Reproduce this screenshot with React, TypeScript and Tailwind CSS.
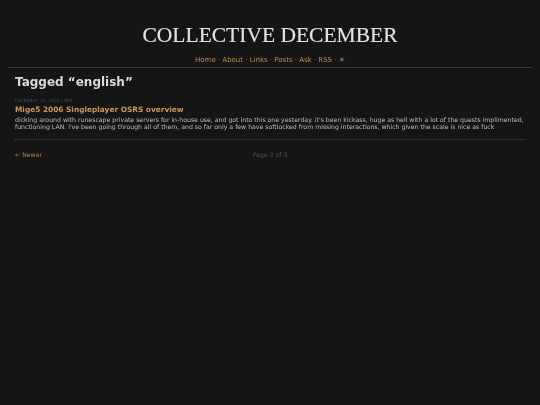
export default function App() {
    const links = ['Home', 'About', 'Links', 'Posts', 'Ask', 'RSS', '☀']

    return (
        <div className="min-h-[405px] bg-[#151515] font-['DejaVu_Sans',sans-serif] overflow-hidden">
            <div className="blur-[0.3px]">
                {/* Header */}
                <header className="pt-[22px] flex flex-col items-center">
                    <h1 className="font-['Liberation_Serif',serif] text-[21.5px] leading-[27px] text-[#e2e2e2] [-webkit-text-stroke:0.15px_#e2e2e2]">COLLECTIVE DECEMBER</h1>
                    <nav className="mt-[6px] flex items-center gap-[2.2px] text-[7px] leading-[10px] text-[#b88a54]">
                        {links.map((link, i) => (
                            <span key={link} className="flex items-center gap-[2.2px]">
                                {i > 0 && <span className="text-[#888888]">·</span>}
                                <span>{link}</span>
                            </span>
                        ))}
                    </nav>
                </header>

                <main className="mx-2 mt-[2px] border-t border-[#3a3a3a] px-[7px]">
                    <h2 className="mt-[6px] text-[12px] leading-[17px] font-bold text-[#d8d8d8]">Tagged “english”</h2>

                    {/* Post */}
                    <article className="mt-[7px] pb-[8px] border-b border-dotted border-[#444444]">
                        <div className="text-[4.5px] leading-[6px] text-[#505050]">December 15, 2021 / Pict</div>
                        <h3 className="mt-[1px] text-[7.4px] leading-[10px] font-bold text-[#cc9658]">Mige5 2006 Singleplayer OSRS overview</h3>
                        <p className="mt-[1px] text-[6.2px] leading-[7.4px] text-[#bebebe]">
                            dicking around with runescape private servers for in-house use, and got into this one yesterday. it's been kickass, huge as hell with a lot of the quests implimented, functioning LAN. i've been going through all of them, and so far only a few have softlocked from missing interactions, which given the scale is nice as fuck
                        </p>
                    </article>

                    {/* Pagination */}
                    <div className="mt-[11px] grid grid-cols-3 text-[6.2px] leading-[8px]">
                        <span className="text-[#b08450]">← Newer</span>
                        <span className="text-center text-[#505050]">Page 3 of 3</span>
                        <span />
                    </div>
                </main>
            </div>
        </div>
    )
}
